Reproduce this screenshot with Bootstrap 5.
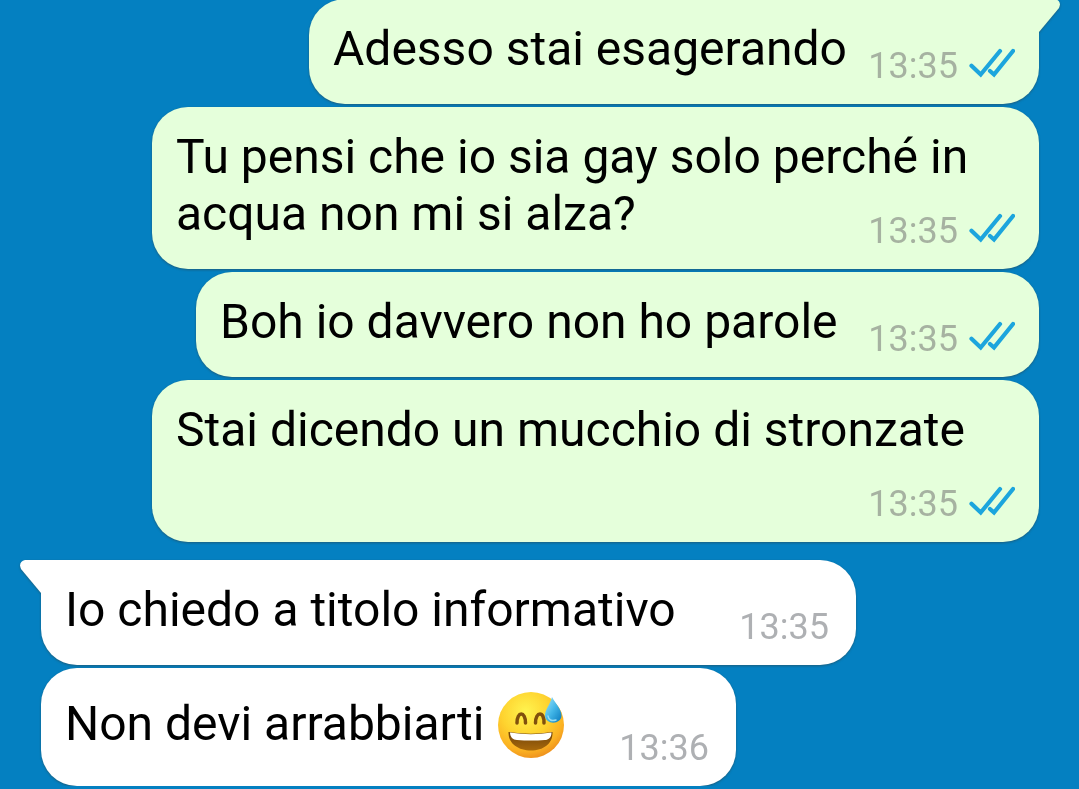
<!DOCTYPE html>
<html lang="it">
<head>
<meta charset="utf-8">
<meta name="viewport" content="width=device-width, initial-scale=1">
<title>Chat</title>
<link href="https://cdn.jsdelivr.net/npm/bootstrap@5.3.0/dist/css/bootstrap.min.css" rel="stylesheet">
<style>
  body { background: #0480c1; color: #000; font-family: Roboto, "Noto Sans", sans-serif; font-size: 48px; line-height: 57px; overflow: hidden; }
  .chat { padding: 0 40px; gap: 3px; margin-top: -1px; }
  .bubble { display: grid; max-width: calc(100% - 112px); padding: 21px 24px 27px; border-radius: 36px; background: #e5ffdb; filter: drop-shadow(0 1px 1px rgba(50, 60, 60, .5)); }
  .bubble > p, .bubble > .stamp { grid-area: 1 / 1; }
  .incoming { background: #fff; margin-left: 1px; }
  .incoming + .incoming { padding-top: 27px; }
  .incoming + .incoming > p { padding-bottom: 6px; }
  .turn { margin-top: 15px; }
  .size-s { width: 695px; }
  .size-m { width: 730px; }
  .size-l { width: 815px; }
  .size-xl { width: 843px; }
  .size-full { width: 887px; }
  .tall { min-height: 162px; }
  .stamp { margin-bottom: -4px; font-size: 36px; line-height: 30px; color: #a6b2a1; gap: 11px; }
  .ticks { width: 46px; height: 30px; margin-bottom: 3px; }
  .incoming .stamp { color: #aeb0b3; margin-right: 3px; }
  .tail { top: 0; width: 22px; height: 34px; }
  .tail-out { right: -21px; }
  .tail-in { left: -21px; }
  .has-tail-out { border-top-right-radius: 0; }
  .has-tail-in { border-top-left-radius: 0; }
  .emoji { width: 68px; height: 68px; margin: -10px 0 -6px 1px; vertical-align: middle; }
</style>
</head>
<body>
<svg class="d-none" aria-hidden="true">
  <symbol id="ticks" viewBox="0 0 46 30"><path d="M2.5 17.7 11.7 26.5 31 3M21 23l4 3.5L44 3" fill="none" stroke="#1ca5dd" stroke-width="4.2" stroke-linecap="round"/></symbol>
</svg>
<main class="chat d-flex flex-column">
  <div class="bubble size-m has-tail-out align-self-end position-relative">
    <svg class="tail tail-out position-absolute" viewBox="0 0 22 34" aria-hidden="true"><path d="M0 0H17Q24 2 21 9L1 33H0Z" fill="#e5ffdb"/></svg>
    <p class="m-0">Adesso stai esagerando</p>
    <div class="stamp d-flex align-items-end align-self-end ms-auto"><time>13:35</time><svg class="ticks" role="img" aria-label="Letto"><use href="#ticks"/></svg></div>
  </div>
  <div class="bubble size-full align-self-end">
    <p class="m-0">Tu pensi che io sia gay solo perché in<br>acqua non mi si alza?</p>
    <div class="stamp d-flex align-items-end align-self-end ms-auto"><time>13:35</time><svg class="ticks" role="img" aria-label="Letto"><use href="#ticks"/></svg></div>
  </div>
  <div class="bubble size-xl align-self-end">
    <p class="m-0">Boh io davvero non ho parole</p>
    <div class="stamp d-flex align-items-end align-self-end ms-auto"><time>13:35</time><svg class="ticks" role="img" aria-label="Letto"><use href="#ticks"/></svg></div>
  </div>
  <div class="bubble size-full tall align-self-end">
    <p class="m-0">Stai dicendo un mucchio di stronzate</p>
    <div class="stamp d-flex align-items-end align-self-end ms-auto"><time>13:35</time><svg class="ticks" role="img" aria-label="Letto"><use href="#ticks"/></svg></div>
  </div>
  <div class="bubble incoming size-l has-tail-in turn align-self-start position-relative">
    <svg class="tail tail-in position-absolute" viewBox="0 0 22 34" aria-hidden="true"><path d="M22 0H5Q-2 2 1 9L21 33H22Z" fill="#fff"/></svg>
    <p class="m-0">Io chiedo a titolo informativo</p>
    <div class="stamp align-self-end ms-auto"><time>13:35</time></div>
  </div>
  <div class="bubble incoming size-s align-self-start">
    <p class="m-0">Non devi arrabbiarti
      <svg class="emoji" viewBox="0 0 68 68" role="img" aria-label="Faccina che ride con goccia di sudore">
        <defs>
          <radialGradient id="face" cx=".42" cy=".3" r=".72"><stop offset="0" stop-color="#fff44f"/><stop offset=".5" stop-color="#fed32f"/><stop offset=".82" stop-color="#fbb122"/><stop offset="1" stop-color="#ee901d"/></radialGradient>
          <linearGradient id="mouth" x1="0" y1="0" x2="0" y2="1"><stop offset="0" stop-color="#70430b"/><stop offset="1" stop-color="#a9690b"/></linearGradient>
          <linearGradient id="drop" x1="0" y1="0" x2="1" y2="1"><stop offset="0" stop-color="#a6e7fa"/><stop offset=".5" stop-color="#43b7e8"/><stop offset="1" stop-color="#0878bd"/></linearGradient>
        </defs>
        <circle cx="34" cy="34" r="33" fill="url(#face)"/>
        <path d="M20 32C20 20 28.500 20 28.500 32M38.500 32C38.500 20 47.500 20 47 32" fill="none" stroke="#80500d" stroke-width="3.500" stroke-linecap="round"/>
        <path d="M11.500 41Q34 44.500 55.500 41C56 53 46 59.500 34 59.500S11 53 11.500 41Z" fill="url(#mouth)"/>
        <path d="M13 41.500Q34 45 54.500 41.500C54.500 47 51 49 48 49Q34 50 20 49C16 49 13 46 13 41.500Z" fill="#fff"/>
        <path d="M55 6C53 14 48 18 48 24.500C48 34 64.500 34 64.500 24.500C64.500 18 58 12 55 6Z" fill="url(#drop)"/>
        <path d="M51 25Q52 31 59 29" fill="none" stroke="#98ddf5" stroke-width="1.500" stroke-linecap="round"/>
      </svg>
    </p>
    <div class="stamp align-self-end ms-auto"><time>13:36</time></div>
  </div>
</main>
<script src="https://cdn.jsdelivr.net/npm/bootstrap@5.3.0/dist/js/bootstrap.bundle.min.js"></script>
</body>
</html>
